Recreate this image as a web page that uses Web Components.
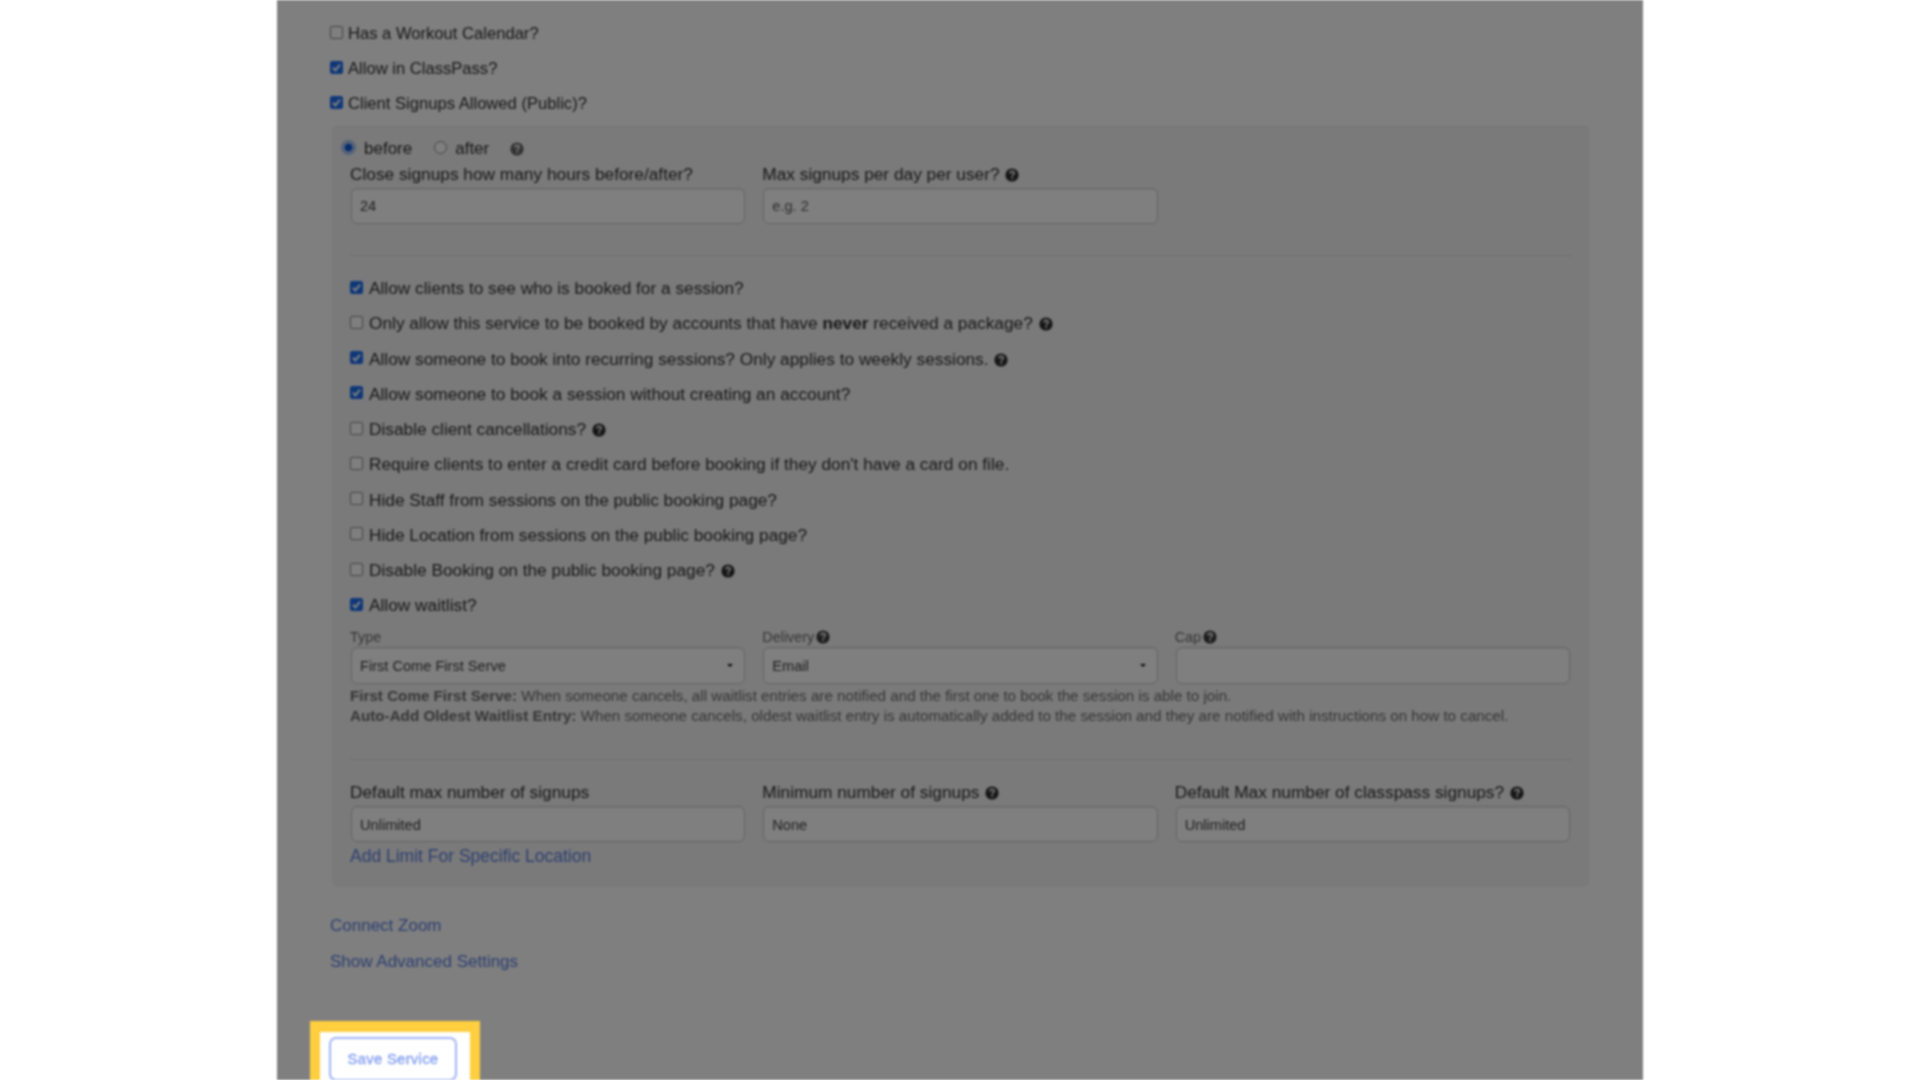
<!DOCTYPE html>
<html>
<head>
<meta charset="utf-8">
<title>Edit Service</title>
<style>
html, body { margin: 0; height: 1080px; overflow: hidden; background: #fff; }
body { font-family: "Liberation Sans", Arial, sans-serif; color: #303030; }
</style>
</head>
<body>
<service-page>
  <check-row>Has a Workout Calendar?</check-row>
  <check-row checked>Allow in ClassPass?</check-row>
  <check-row checked>Client Signups Allowed (Public)?</check-row>

  <signup-well>
    <radio-choice></radio-choice>
    <field-grid class="first">
      <text-field><span slot="label">Close signups how many hours before/after?</span>24</text-field>
      <text-field placeholder><span slot="label">Max signups per day per user? <help-icon></help-icon></span>e.g. 2</text-field>
    </field-grid>
    <well-rule class="r1"></well-rule>
    <div class="checks">
      <check-row inner checked>Allow clients to see who is booked for a session?</check-row>
      <check-row inner>Only allow this service to be booked by accounts that have <b>never</b> received a package? <help-icon></help-icon></check-row>
      <check-row inner checked>Allow someone to book into recurring sessions? Only applies to weekly sessions. <help-icon></help-icon></check-row>
      <check-row inner checked>Allow someone to book a session without creating an account?</check-row>
      <check-row inner>Disable client cancellations? <help-icon></help-icon></check-row>
      <check-row inner>Require clients to enter a credit card before booking if they don't have a card on file.</check-row>
      <check-row inner>Hide Staff from sessions on the public booking page?</check-row>
      <check-row inner>Hide Location from sessions on the public booking page?</check-row>
      <check-row inner>Disable Booking on the public booking page? <help-icon></help-icon></check-row>
      <check-row inner checked>Allow waitlist?</check-row>
    </div>
    <field-grid class="wait">
      <text-field small select><span slot="label">Type</span>First Come First Serve</text-field>
      <text-field small select><span slot="label">Delivery <help-icon></help-icon></span>Email</text-field>
      <text-field small><span slot="label">Cap <help-icon></help-icon></span></text-field>
    </field-grid>
    <help-lines>
      <div><b>First Come First Serve:</b> When someone cancels, all waitlist entries are notified and the first one to book the session is able to join.</div>
      <div><b>Auto-Add Oldest Waitlist Entry:</b> When someone cancels, oldest waitlist entry is automatically added to the session and they are notified with instructions on how to cancel.</div>
    </help-lines>
    <well-rule class="r2"></well-rule>
    <field-grid class="limits">
      <text-field low><span slot="label">Default max number of signups</span>Unlimited</text-field>
      <text-field low><span slot="label">Minimum number of signups <help-icon></help-icon></span>None</text-field>
      <text-field low><span slot="label">Default Max number of classpass signups? <help-icon></help-icon></span>Unlimited</text-field>
    </field-grid>
    <link-row well>Add Limit For Specific Location</link-row>
  </signup-well>

  <link-row class="zoom">Connect Zoom</link-row>
  <link-row>Show Advanced Settings</link-row>
  <save-spot>Save Service</save-spot>
</service-page>

<script>
function shadow(el, html) {
  el.attachShadow({ mode: "open" }).innerHTML = html;
}

const tick = "url(\"data:image/svg+xml,%3Csvg xmlns='http://www.w3.org/2000/svg' viewBox='0 0 13 13'%3E%3Cpath d='M3 6.8L5.4 9.4L10 3.6' fill='none' stroke='white' stroke-width='2'/%3E%3C/svg%3E\")";

class ServicePage extends HTMLElement {
  constructor() {
    super();
    shadow(this, `<style>
:host {
  display: block;
  box-sizing: border-box;
  width: 1366px;
  height: 1080px;
  margin: 0 auto;
  padding: 16.5px 54px 0 53px;
  background: #fff;
  overflow: hidden;
  filter: blur(0.8px);
}
</style><slot></slot>`);
  }
}

class CheckRow extends HTMLElement {
  constructor() {
    super();
    const checked = this.hasAttribute("checked") ? "checked" : "";
    shadow(this, `<style>
:host {
  display: flex;
  align-items: center;
  height: 35px;
  font-size: 16.6px;
  white-space: pre-wrap;
}
:host([inner]) { height: 35.25px; font-size: 17.3px; }
input {
  appearance: none;
  box-sizing: border-box;
  width: 13px;
  height: 13px;
  margin: -3px 5px 0 0;
  background: #fff;
  border: 1px solid #888;
  border-radius: 2px;
  flex: none;
}
:host([inner]) input { margin-right: 6px; }
input:checked { background: #1f6ff0 ${tick} center / 13px no-repeat; border-color: #1f6ff0; }
</style><input type="checkbox" ${checked}><span><slot></slot></span>`);
  }
}

class HelpIcon extends HTMLElement {
  constructor() {
    super();
    shadow(this, `<style>
:host { display: inline-block; width: 14px; height: 14px; vertical-align: -2px; margin-left: var(--help-gap, 1px); color: var(--help-color, #2c2c2c); }
svg { display: block; }
</style><svg width="14" height="14" viewBox="0 0 14 14">
<circle cx="7" cy="7" r="6.6" fill="currentColor"/>
<path d="M4.9 5.4C5 4.1 5.9 3.4 7.1 3.4C8.3 3.4 9.2 4.2 9.2 5.2C9.2 6.6 7.2 6.7 7.2 8.2" fill="none" stroke="#f5f5f5" stroke-width="1.6"/>
<rect x="6.3" y="9.2" width="1.8" height="1.7" fill="#f5f5f5"/>
</svg>`);
  }
}

class SignupWell extends HTMLElement {
  constructor() {
    super();
    shadow(this, `<style>
:host {
  display: block;
  box-sizing: border-box;
  margin: 4.5px 0 0 2px;
  padding: 11.5px 16px 21px 18px;
  height: 761px;
  background: #f5f5f5;
  border-radius: 5px;
  box-shadow: inset 0 1px 1px rgba(0,0,0,.05);
}
::slotted(field-grid.first) { margin-top: 6.5px; }
::slotted(well-rule.r1) { margin-top: 31px; }
::slotted(.checks) { margin-top: 15px; }
::slotted(field-grid.wait) { margin-top: 4.5px; }
::slotted(well-rule.r2) { margin-top: 33px; }
::slotted(field-grid.limits) { margin-top: 22px; }
</style><slot></slot>`);
  }
}

class RadioChoice extends HTMLElement {
  constructor() {
    super();
    shadow(this, `<style>
:host {
  display: flex;
  align-items: center;
  height: 20px;
  margin-left: -8px;
  font-size: 17px;
  --help-color: #666;
}
input {
  appearance: none;
  box-sizing: border-box;
  width: 13px;
  height: 13px;
  margin: -1px 9px 0 0;
  background: #fff;
  border: 1px solid #888;
  border-radius: 50%;
}
input:nth-of-type(2) { margin-right: 8px; }
input:checked {
  border-color: #6f9ae8;
  background: radial-gradient(circle, #0a5ad8 0 3.6px, #cfe0fa 4.4px);
  box-shadow: 0 0 3px #6f9ae8;
}
span { margin: 2px 22px 0 0; }
span.after { margin-right: 20px; }
help-icon { margin-top: 2px; }
</style><input type="radio" name="when" checked><span>before</span><input type="radio" name="when"><span class="after">after</span><help-icon></help-icon>`);
  }
}

class FieldGrid extends HTMLElement {
  constructor() {
    super();
    shadow(this, `<style>
:host {
  display: grid;
  grid-template-columns: repeat(3, 1fr);
  column-gap: 18px;
  width: 1219px;
}
</style><slot></slot>`);
  }
}

class TextField extends HTMLElement {
  constructor() {
    super();
    const arrow = this.hasAttribute("select")
      ? `<svg width="6" height="3" viewBox="0 0 6 3"><path d="M0 0H6L3 3Z" fill="#111"/></svg>` : "";
    shadow(this, `<style>
:host { display: block; font-size: 17.3px; }
.label { height: 20px; line-height: 20px; margin-bottom: 4px; white-space: nowrap; }
.box {
  box-sizing: border-box;
  display: flex;
  align-items: center;
  justify-content: space-between;
  height: 36px;
  margin: 0 -1px 0 1px;
  padding: 0 8px;
  background: #fff;
  border: 1px solid #c8c8c8;
  border-radius: 6px;
  font-size: 14.6px;
  color: #404040;
  box-shadow: inset 0 1px 1px rgba(0,0,0,.06);
  white-space: nowrap;
}
:host([placeholder]) .box { color: #5c5c5c; }
:host([low]) .box { padding-top: 2px; }
:host([small]) { font-size: 14.4px; --help-gap: -2px; }
:host([small]) .label { height: 18px; line-height: 18px; margin-bottom: 1px; color: #6c6c6c; --help-color: #3c3c3c; }
:host([small]) .box { height: 37px; }
svg { margin-right: 3px; }
</style><div class="label"><slot name="label"></slot></div><div class="box"><span><slot></slot></span>${arrow}</div>`);
  }
}

class WellRule extends HTMLElement {
  constructor() {
    super();
    shadow(this, `<style>
:host { display: block; height: 1px; width: 1222px; background: #ddd; }
</style>`);
  }
}

class HelpLines extends HTMLElement {
  constructor() {
    super();
    shadow(this, `<style>
:host { display: block; margin-top: 2px; font-size: 15.2px; line-height: 20px; color: #6c6c6c; white-space: nowrap; }
</style><slot></slot>`);
  }
}

class LinkRow extends HTMLElement {
  constructor() {
    super();
    shadow(this, `<style>
:host {
  display: flex;
  align-items: center;
  height: 36px;
  font-size: 17px;
  color: #5b7fe0;
}
:host(.zoom) { margin-top: 21px; }
:host([well]) { height: 20px; margin-top: 4px; font-size: 17.5px; }
</style><slot></slot>`);
  }
}

class SaveSpot extends HTMLElement {
  constructor() {
    super();
    shadow(this, `<style>
:host {
  display: block;
  position: relative;
  z-index: 2;
  box-sizing: border-box;
  width: 170px;
  height: 70px;
  margin: 41px 0 0 -20px;
  padding: 5px 9px 0;
  background: #fff;
  border: solid #ffcf40;
  border-width: 11px 10px;
  box-shadow: 0 0 0 2000px rgba(0,0,0,.5);
}
.btn {
  box-sizing: border-box;
  display: flex;
  align-items: center;
  justify-content: center;
  width: 128px;
  height: 44px;
  border: 2px solid #a0b4f5;
  border-radius: 7px;
  color: #7f9bf0;
  font-size: 14.8px;
  letter-spacing: .3px;
  -webkit-text-stroke: .3px #7f9bf0;
}
</style><div class="btn"><slot></slot></div>`);
  }
}

customElements.define("service-page", ServicePage);
customElements.define("check-row", CheckRow);
customElements.define("help-icon", HelpIcon);
customElements.define("signup-well", SignupWell);
customElements.define("radio-choice", RadioChoice);
customElements.define("field-grid", FieldGrid);
customElements.define("text-field", TextField);
customElements.define("well-rule", WellRule);
customElements.define("help-lines", HelpLines);
customElements.define("link-row", LinkRow);
customElements.define("save-spot", SaveSpot);
</script>
</body>
</html>
